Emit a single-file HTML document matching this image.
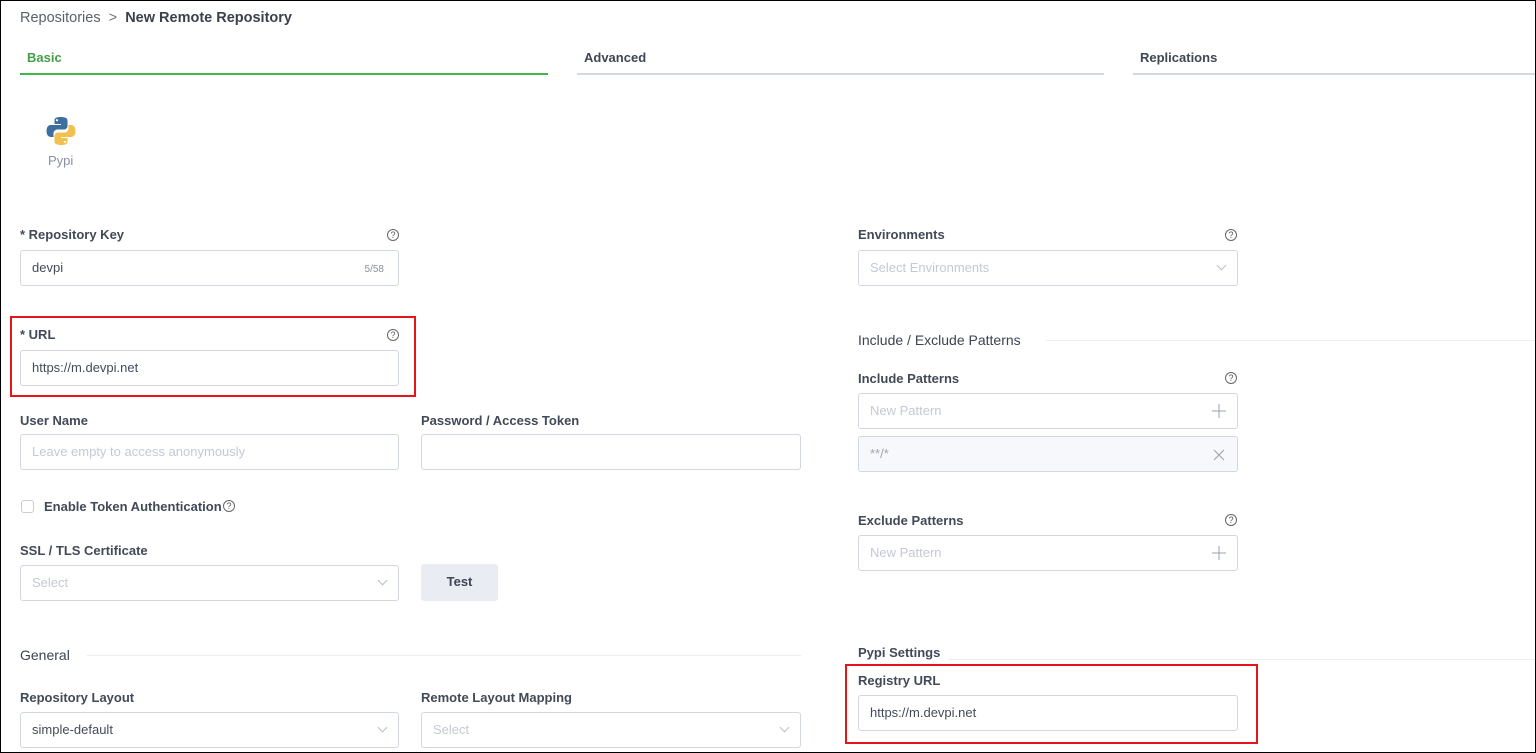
<!DOCTYPE html>
<html><head><meta charset="utf-8"><style>
*{box-sizing:border-box;margin:0;padding:0}
body{width:1536px;height:753px;background:#fff;font-family:"Liberation Sans",sans-serif;position:relative;overflow:hidden;color:#3d4350}
.frame{position:absolute;left:0;top:0;width:1536px;height:753px;border:1px solid #000;pointer-events:none;z-index:10}
.a{position:absolute}
.lbl{position:absolute;font-size:13px;font-weight:bold;color:#424957}
.inp{position:absolute;height:36px;border:1px solid #d3d7e3;border-radius:3px;font-size:13px;padding:0 11px;line-height:34px;color:#444b58;background:#fff}
.ph{color:#c5c9d6}
.q{position:absolute;width:12px;height:12px;border:1px solid #666;border-radius:50%;font-size:9px;line-height:10px;text-align:center;color:#555}
.chev{position:absolute;right:12px;top:11px;width:7px;height:7px;border-right:1px solid #b9bdc9;border-bottom:1px solid #b9bdc9;transform:rotate(45deg)}
.ic{position:absolute;right:11px;top:10px}
.sec{position:absolute;font-size:14px;color:#3d4350}
.hr{position:absolute;height:1px;background:#eceef3}
.red{position:absolute;border:2px solid #e8141b}
</style></head><body>
<div class="frame"></div>
<div class="a" style="left:20px;top:10px;font-size:14.5px;color:#5a606b">Repositories &nbsp;<span style="color:#777">&gt;</span>&nbsp; <span style="color:#3b404b;font-weight:bold">New Remote Repository</span></div>

<div class="a" style="left:27px;top:50px;font-size:13px;font-weight:bold;color:#43a047">Basic</div>
<div class="a" style="left:20px;top:73px;width:528px;height:2px;background:#43b649"></div>
<div class="a" style="left:584px;top:50px;font-size:13px;font-weight:bold;color:#3f4654">Advanced</div>
<div class="a" style="left:577px;top:73px;width:527px;height:2px;background:#d5d8e3"></div>
<div class="a" style="left:1140px;top:50px;font-size:13px;font-weight:bold;color:#3f4654">Replications</div>
<div class="a" style="left:1133px;top:73px;width:403px;height:2px;background:#d5d8e3"></div>

<svg class="a" style="left:46px;top:116px" width="30" height="30" viewBox="0 0 30 30">
<path d="M14.5 1c-6 0-6 2.5-6 3.5V8h6.5v1H5c-3 0-4.5 2.5-4.5 6s1.5 6 4.5 6h2.5v-3.5c0-2.5 2-4 4-4h6.5c2 0 3.5-1.5 3.5-3.5V4.5C21.5 2 19 1 14.5 1z" fill="#3d6e9e"/>
<circle cx="11" cy="4.2" r="1.1" fill="#fff"/>
<path d="M15.5 29c6 0 6-2.5 6-3.5V22H15v-1h10c3 0 4.5-2.5 4.5-6s-1.5-6-4.5-6h-2.5v3.5c0 2.5-2 4-4 4H12c-2 0-3.5 1.5-3.5 3.5v5.5C8.5 28 11 29 15.5 29z" fill="#f2c04f"/>
<circle cx="19" cy="25.8" r="1.1" fill="#fff"/>
</svg>
<div class="a" style="left:48px;top:153px;font-size:13px;color:#8a90a8">Pypi</div>

<div class="lbl" style="left:20px;top:227px">* Repository Key</div>
<div class="q" style="left:387px;top:229px">?</div>
<div class="inp" style="left:20px;top:250px;width:379px">devpi<span style="position:absolute;right:14px;top:2px;font-size:10px;color:#8b909c">5/58</span></div>

<div class="red" style="left:10px;top:316px;width:406px;height:81px"></div>
<div class="lbl" style="left:20px;top:327px">* URL</div>
<div class="q" style="left:387px;top:329px">?</div>
<div class="inp" style="left:20px;top:350px;width:379px">https://m.devpi.net</div>

<div class="lbl" style="left:20px;top:413px">User Name</div>
<div class="inp ph" style="left:20px;top:434px;width:379px">Leave empty to access anonymously</div>
<div class="lbl" style="left:421px;top:413px">Password / Access Token</div>
<div class="inp" style="left:421px;top:434px;width:380px"></div>

<div class="a" style="left:21px;top:500px;width:13px;height:13px;border:1px solid #c8ccd8;border-radius:3px"></div>
<div class="lbl" style="left:44px;top:499px">Enable Token Authentication</div>
<div class="q" style="left:223px;top:500px">?</div>

<div class="lbl" style="left:20px;top:543px">SSL / TLS Certificate</div>
<div class="inp ph" style="left:20px;top:565px;width:379px">Select<div class="chev"></div></div>
<div class="a" style="left:421px;top:564px;width:77px;height:37px;background:#e9ecf3;border-radius:3px;font-size:13px;font-weight:bold;text-align:center;line-height:36px;color:#3f4654">Test</div>

<div class="sec" style="left:20px;top:647px">General</div>
<div class="hr" style="left:87px;top:655px;width:714px"></div>

<div class="lbl" style="left:20px;top:690px">Repository Layout</div>
<div class="inp" style="left:20px;top:712px;width:379px">simple-default<div class="chev"></div></div>
<div class="lbl" style="left:421px;top:690px">Remote Layout Mapping</div>
<div class="inp ph" style="left:421px;top:712px;width:380px">Select<div class="chev"></div></div>

<div class="lbl" style="left:858px;top:227px">Environments</div>
<div class="q" style="left:1225px;top:229px">?</div>
<div class="inp ph" style="left:858px;top:250px;width:380px">Select Environments<div class="chev"></div></div>

<div class="sec" style="left:858px;top:332px">Include / Exclude Patterns</div>
<div class="hr" style="left:1046px;top:340px;width:490px"></div>

<div class="lbl" style="left:858px;top:371px">Include Patterns</div>
<div class="q" style="left:1225px;top:372px">?</div>
<div class="inp ph" style="left:858px;top:393px;width:380px">New Pattern<svg class="ic" width="14" height="14"><path d="M7 0V14M0 7H14" stroke="#9ba0ae" stroke-width="1"/></svg></div>
<div class="inp" style="left:858px;top:436px;width:380px;background:#f7f8fb;color:#a0a5b2">**/*<svg class="ic" width="14" height="14" style="top:11px"><path d="M2 2L12 12M12 2L2 12" stroke="#9ba0ae" stroke-width="1"/></svg></div>

<div class="lbl" style="left:858px;top:513px">Exclude Patterns</div>
<div class="q" style="left:1225px;top:514px">?</div>
<div class="inp ph" style="left:858px;top:535px;width:380px">New Pattern<svg class="ic" width="14" height="14"><path d="M7 0V14M0 7H14" stroke="#9ba0ae" stroke-width="1"/></svg></div>

<div class="lbl" style="left:858px;top:645px">Pypi Settings</div>
<div class="hr" style="left:948px;top:659px;width:588px"></div>
<div class="red" style="left:845px;top:664px;width:413px;height:80px"></div>
<div class="lbl" style="left:858px;top:673px">Registry URL</div>
<div class="inp" style="left:858px;top:695px;width:380px">https://m.devpi.net</div>
</body></html>
